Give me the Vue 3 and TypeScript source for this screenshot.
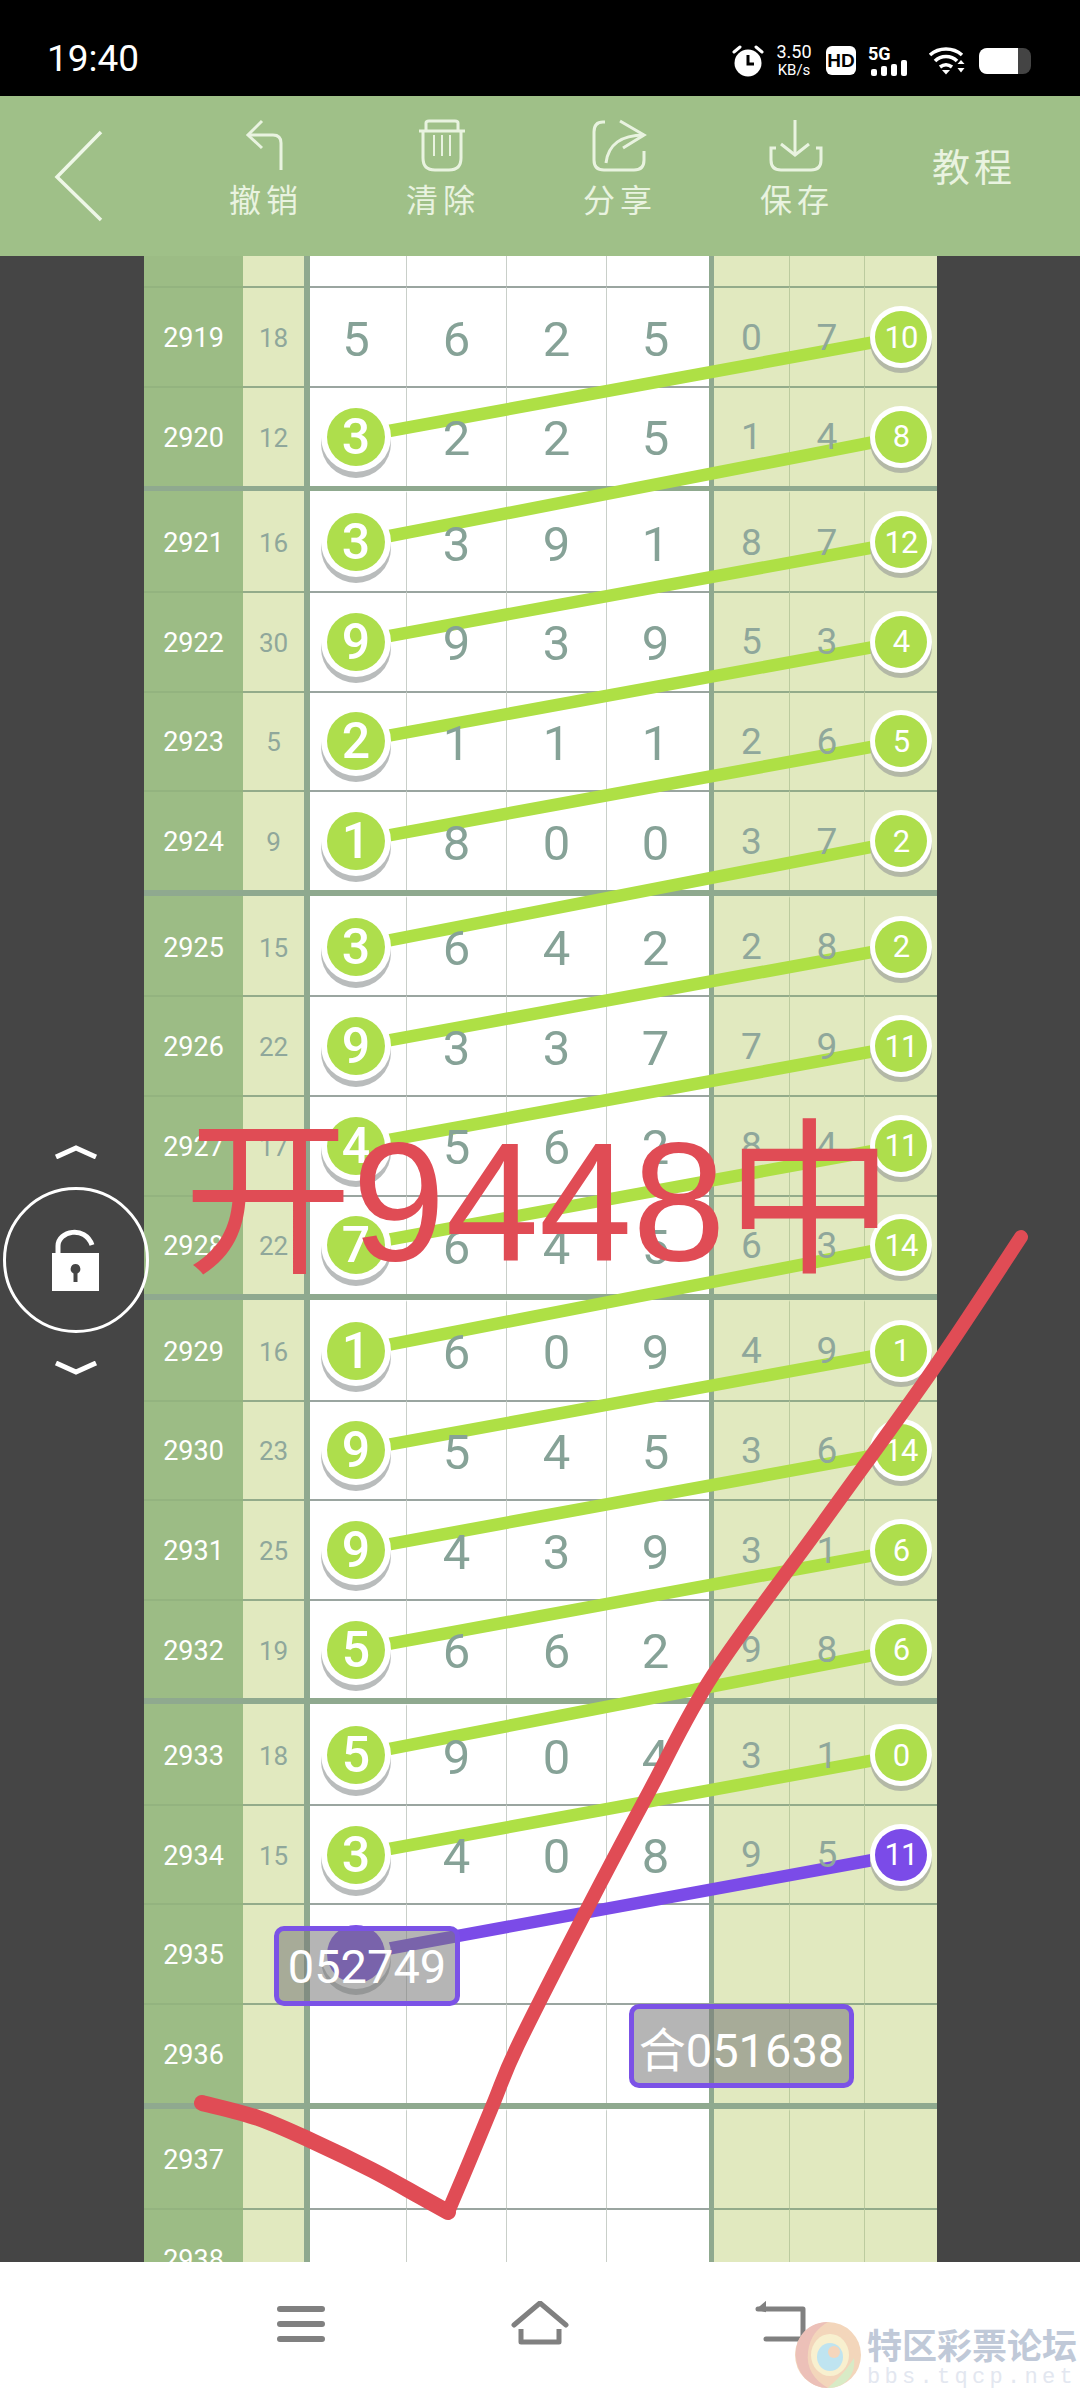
<script setup lang="ts">
interface Row {
  id: number
  sum: string
  main: string[]
  right: string[]
  leftBall?: boolean
  rightBall?: boolean
  leftPurple?: boolean
  rightPurple?: boolean
}

const ROW_H = 99.6
const SEP_H = 5.9
const TABLE_TOP = 186.8
const LEFT_X = 356
const RIGHT_X = 900

function mk(id: number, sum: string, m: string, r: string): Row {
  return {
    id,
    sum,
    main: m.split(''),
    right: r.split(' '),
    leftBall: id >= 2920 && id <= 2935,
    rightBall: id >= 2919 && id <= 2934,
  }
}

const groups: Row[][] = [
  [
    { id: 2918, sum: '14', main: ['7', '1', '7', '1'], right: ['', '', ''] },
    mk(2919, '18', '5625', '0 7 10'),
    mk(2920, '12', '3225', '1 4 8'),
  ],
  [mk(2921, '16', '3391', '8 7 12'), mk(2922, '30', '9939', '5 3 4'), mk(2923, '5', '2111', '2 6 5'), mk(2924, '9', '1800', '3 7 2')],
  [mk(2925, '15', '3642', '2 8 2'), mk(2926, '22', '9337', '7 9 11'), mk(2927, '17', '4562', '8 4 11'), mk(2928, '22', '7645', '6 3 14')],
  [mk(2929, '16', '1609', '4 9 1'), mk(2930, '23', '9545', '3 6 14'), mk(2931, '25', '9439', '3 1 6'), mk(2932, '19', '5662', '9 8 6')],
  [
    mk(2933, '18', '5904', '3 1 0'),
    { ...mk(2934, '15', '3408', '9 5 11'), rightPurple: true },
    { id: 2935, sum: '', main: ['', '', '', ''], right: ['', '', ''], leftBall: true, leftPurple: true },
    { id: 2936, sum: '', main: ['', '', '', ''], right: ['', '', ''] },
  ],
  [
    { id: 2937, sum: '', main: ['', '', '', ''], right: ['', '', ''] },
    { id: 2938, sum: '', main: ['', '', '', ''], right: ['', '', ''] },
  ],
]

interface Seg { x1: number; y1: number; x2: number; y2: number; purple: boolean }

function buildSegs(): Seg[] {
  const segs: Seg[] = []
  let y = TABLE_TOP
  let prev: { row: Row; cy: number } | null = null
  for (const g of groups) {
    for (const row of g) {
      const cy = y + 50.8
      if (row.leftBall && prev && prev.row.rightBall) {
        segs.push({ x1: LEFT_X, y1: cy, x2: RIGHT_X, y2: prev.cy, purple: !!row.leftPurple })
      }
      prev = { row, cy }
      y += ROW_H
    }
    y += SEP_H
  }
  return segs
}

function smooth(p: number[][]): string {
  let d = `M${p[0][0]} ${p[0][1]}`
  for (let i = 0; i < p.length - 1; i++) {
    const a = p[Math.max(0, i - 1)]
    const b = p[i]
    const c = p[i + 1]
    const e = p[Math.min(p.length - 1, i + 2)]
    const c1x = b[0] + (c[0] - a[0]) / 6
    const c1y = b[1] + (c[1] - a[1]) / 6
    const c2x = c[0] - (e[0] - b[0]) / 6
    const c2y = c[1] - (e[1] - b[1]) / 6
    d += `C${c1x} ${c1y} ${c2x} ${c2y} ${c[0]} ${c[1]}`
  }
  return d
}

const tickDown = smooth([[202, 2103], [258, 2118], [312, 2141], [372, 2170], [421, 2197], [448, 2212]])
const tickUp = smooth([[448, 2212], [470, 2160], [494, 2102], [518, 2045], [585, 1913], [650, 1790], [713, 1675], [822, 1524], [932, 1371], [1021, 1237]])

const segs = buildSegs()
const tableHeight = groups.reduce((a, g) => a + g.length * ROW_H + SEP_H, 0)
const tools = ['撤销', '清除', '分享', '保存']
</script>

<template>
  <div class="app">
    <header class="status">
      <span class="time">19:40</span>
      <div class="status-right">
        <svg class="alarm" width="34" height="34" viewBox="0 0 34 34">
          <circle cx="17" cy="19" r="13.500" fill="#fff" />
          <path d="M17 11v9h6" fill="none" stroke="#000" stroke-width="3" />
          <path d="M3 8l6-5M31 8l-6-5" stroke="#fff" stroke-width="3" stroke-linecap="round" />
        </svg>
        <div class="speed"><span class="sp1">3.50</span><span class="sp2">KB/s</span></div>
        <span class="hd">HD</span>
        <div class="signal">
          <span class="five">5G</span>
          <div class="bars"><i class="b1"></i><i class="b2"></i><i class="b3"></i><i class="b4"></i></div>
        </div>
        <svg class="wifi" width="38" height="28" viewBox="0 0 38 28">
          <path d="M2 8C11 0 25 0 34 8" fill="none" stroke="#fff" stroke-width="3.600" />
          <path d="M7 14C13 8 23 8 29 14" fill="none" stroke="#fff" stroke-width="3.600" />
          <path d="M12 20c4-3 8-3 12 0" fill="none" stroke="#fff" stroke-width="3.600" />
          <path d="M14 23h8l-4 4.500z" fill="#fff" />
          <path d="M33 13l3.500 4h-7zM29.500 21h7l-3.500 4.500z" fill="#fff" />
        </svg>
        <div class="battery"><div class="battery-fill"></div></div>
      </div>
    </header>

    <nav class="toolbar">
      <svg class="back" width="60" height="92" viewBox="0 0 60 92">
        <path d="M51 2L7 47L51 90" fill="none" stroke="#eef7e7" stroke-width="3.500" />
      </svg>
      <div v-for="(t, i) in tools" :key="t" class="tool">
        <svg width="60" height="56" viewBox="0 0 60 56" fill="none" stroke="#e9f3e0" stroke-width="3">
          <template v-if="i === 0">
            <path d="M27 3L13 17L27 30" />
            <path d="M13 17H38Q46 17 46 25V52" />
          </template>
          <template v-else-if="i === 1">
            <path d="M7 13H53" />
            <path d="M14 13V5Q14 3 17 3H43Q46 3 46 5V13" />
            <path d="M11 13V40Q11 52 23 52H37Q49 52 49 40V13" />
            <path d="M22 17V38M30 17V38M38 17V38" stroke-width="2" />
          </template>
          <template v-else-if="i === 2">
            <path d="M16 4H14Q5 4 5 14V42Q5 52 15 52H45Q55 52 55 42V33" />
            <path d="M31 3L55 17L34 30" />
            <path d="M17 45C19 27 32 17 55 17" />
          </template>
          <template v-else>
            <path d="M29 2V37" />
            <path d="M15 26L29 37L43 26" />
            <path d="M10 30H5V42Q5 52 15 52H45Q55 52 55 42V30H50" />
          </template>
        </svg>
        <span class="tool-label">{{ t }}</span>
      </div>
      <span class="course">教程</span>
    </nav>

    <main class="board">
      <div class="table">
        <svg
          class="links"
          width="793"
          :height="tableHeight"
          :viewBox="`144 ${TABLE_TOP} 793 ${tableHeight}`"
        >
          <line
            v-for="(s, i) in segs"
            :key="i"
            :x1="s.x1"
            :y1="s.y1"
            :x2="s.x2"
            :y2="s.y2"
            :stroke="s.purple ? '#7b4be8' : '#aee045'"
            stroke-width="12.500"
          />
        </svg>
        <div v-for="(g, gi) in groups" :key="gi" class="group">
          <div v-for="(r, ri) in g" :key="r.id" class="row" :class="{ first: ri === 0 }">
            <div class="cell id-cell"><span class="num">{{ r.id }}</span></div>
            <div class="cell sum-cell"><span class="num">{{ r.sum }}</span></div>
            <div class="bar"></div>
            <div v-for="(m, mi) in r.main" :key="mi" class="cell main-cell">
              <span v-if="mi === 0 && r.leftBall" class="ball big" :class="{ purple: r.leftPurple }">{{ m }}</span>
              <span v-else class="num">{{ m }}</span>
            </div>
            <div class="bar"></div>
            <div v-for="(m, mi) in r.right" :key="mi" class="cell right-cell">
              <span v-if="mi === 2 && r.rightBall" class="ball small" :class="{ purple: r.rightPurple }">{{ m }}</span>
              <span v-else class="num">{{ m }}</span>
            </div>
          </div>
          <div class="sep"></div>
        </div>
      </div>

      <div class="tag tag-a">052749</div>
      <div class="tag tag-b">合051638</div>

      <div class="lockrail">
        <svg width="44" height="14" viewBox="0 0 44 14"><path d="M2 12L22 3L42 12" fill="none" stroke="#fff" stroke-width="5" /></svg>
        <div class="lockcircle">
          <svg width="50" height="64" viewBox="0 0 50 64">
            <path d="M7 27V18C7 3 34 -3 41 17" fill="none" stroke="#fff" stroke-width="5" />
            <path fill-rule="evenodd" fill="#fff" d="M1 25H48V63H1ZM24.500 36a5 5 0 0 0-2 9.500V54h4v-8.500a5 5 0 0 0-2-9.500Z" />
          </svg>
        </div>
        <svg width="44" height="14" viewBox="0 0 44 14"><path d="M2 2L22 11L42 2" fill="none" stroke="#fff" stroke-width="5" /></svg>
      </div>

      <div class="scrawl">开9448中</div>
      <svg class="tick" width="1080" height="2006" viewBox="0 256 1080 2006" fill="none" stroke="#e04c55" stroke-linecap="round" stroke-linejoin="round">
        <path :d="tickDown" stroke-width="16" />
        <path :d="tickUp" stroke-width="14" />
      </svg>
    </main>

    <footer class="nav">
      <svg width="60" height="44" viewBox="0 0 60 44"><path d="M10 8H52M10 23H52M10 38H52" stroke="#808080" stroke-width="6" stroke-linecap="round" /></svg>
      <svg width="60" height="44" viewBox="0 0 60 44" fill="none" stroke="#808080" stroke-width="5">
        <path d="M4 24L30 2L56 24" stroke-linecap="round" stroke-linejoin="round" />
        <path d="M11 28V41H49V28" stroke-linejoin="round" />
      </svg>
      <svg width="60" height="44" viewBox="0 0 60 44" fill="none" stroke="#808080" stroke-width="5">
        <path d="M8 8H53V38H16" stroke-linejoin="round" stroke-linecap="round" />
        <path d="M15 2L8 8L15 10Z" fill="#808080" stroke-width="2" />
      </svg>
      <div class="watermark">
        <svg class="wm-logo" width="68" height="66" viewBox="0 0 68 66">
          <ellipse cx="34" cy="33" rx="33" ry="33" fill="#f3d6bb" />
          <path d="M34 0C10 0 0 20 2 36C4 54 18 66 34 66C20 58 12 46 14 30C16 14 24 6 34 0Z" fill="#ecc0b8" />
          <path d="M34 66C52 66 62 52 60 36C50 52 42 58 34 66Z" fill="#d8ebc6" />
          <ellipse cx="36" cy="33" rx="19" ry="21" fill="#f8f0cf" />
          <ellipse cx="36" cy="35" rx="13" ry="14" fill="#bfe4f0" />
          <ellipse cx="40" cy="30" rx="6" ry="6" fill="#f5d6bc" />
        </svg>
        <div class="wm-text">
          <span class="wm-main">特区彩票论坛</span>
          <span class="wm-sub">bbs.tqcp.net</span>
        </div>
      </div>
    </footer>
  </div>
</template>

<style>
html, body { margin: 0; padding: 0; }
</style>

<style scoped>
.app {
  position: relative;
  width: 1080px;
  height: 2388px;
  display: flex;
  flex-direction: column;
  overflow: hidden;
  font-family: Roboto, "Noto Sans CJK SC", sans-serif;
  background: #454545;
}
.status {
  height: 96px;
  flex: none;
  background: #000;
  color: #fff;
  display: flex;
  align-items: flex-start;
  justify-content: space-between;
  padding: 37px 49px 0 47px;
  box-sizing: border-box;
}
.time { font-size: 37px; line-height: 44px; }
.status-right { display: flex; align-items: center; gap: 0; margin-top: 6px; }
.alarm { margin-right: 10px; }
.speed { display: flex; flex-direction: column; align-items: center; width: 38px; line-height: 1; margin-right: 13px; }
.sp1 { font-size: 18px; }
.sp2 { font-size: 15px; margin-top: 2px; }
.hd {
  width: 30px; height: 29px; background: #fff; color: #000; border-radius: 6px;
  font: 700 19px/29px "Liberation Sans", sans-serif; text-align: center; margin-right: 12px;
}
.signal { position: relative; width: 46px; height: 30px; margin-right: 14px; }
.five { position: absolute; left: 0; top: 0; font-size: 18px; font-weight: 700; line-height: 16px; }
.bars { position: absolute; right: 7px; bottom: 0; display: flex; align-items: flex-end; gap: 4px; }
.bars i { display: block; width: 6px; background: #fff; border-radius: 2px; }
.b1 { height: 7px; } .b2 { height: 10px; } .b3 { height: 12px; } .b4 { height: 16px; }
.wifi { margin-right: 13px; }
.battery {
  width: 52px; height: 26px; border-radius: 8px; background: #444; overflow: hidden;
}
.battery-fill { width: 39px; height: 100%; background: #fff; border-radius: 6px 0 0 6px; }

.toolbar {
  height: 160px;
  flex: none;
  background: #9fc088;
  display: flex;
  align-items: flex-start;
  padding-left: 50px;
  color: #e9f3e0;
}
.back { margin-top: 34px; margin-right: 66px; }
.tool {
  width: 177px;
  display: flex;
  flex-direction: column;
  align-items: center;
  padding-top: 22px;
}
.tool-label { font-size: 32px; letter-spacing: 5px; line-height: 36px; margin-top: 9px; padding-left: 3px; }
.course { font-size: 38px; letter-spacing: 4px; margin-left: 48px; margin-top: 50px; line-height: 44px; }

.board { flex: 1; position: relative; overflow: hidden; background: #454545; }
.table { position: relative; width: 793px; margin: -69.2px 0 0 144px; }
.links { position: absolute; left: 0; top: 0; z-index: 1; }
.row {
  height: 99.6px;
  display: grid;
  grid-template-columns: 99px 61px 6px 96px 100px 100px 103px 5px 75px 75px 73px;
}
.cell {
  box-sizing: border-box;
  display: flex;
  align-items: center;
  justify-content: center;
  border-top: 2px solid #9aa5a0;
}
.row.first .cell { border-top-color: transparent; }
.num { position: relative; z-index: 2; }
.id-cell { background: #9cbc85; border-top-color: #93b37f; color: #fff; font-size: 27px; }
.sum-cell { background: #e1e9bf; border-top-color: #93ab8a; color: #8fa79b; font-size: 26px; }
.id-cell .num, .sum-cell .num { padding-top: 2px; }
.bar { background: #8fa98f; }
.main-cell { background: #fff; color: #86a297; font-size: 49px; border-left: 1px solid #c9cfc9; }
.main-cell .num { padding-top: 4px; }
.main-cell:nth-child(4) { padding-right: 4px; border-left: none; }
.main-cell:nth-child(7) { padding-right: 5px; }
.right-cell { background: #e1e9bf; border-top-color: #93ab8a; color: #8fa79b; font-size: 37px; border-left: 1px solid #bccb9f; }
.right-cell:nth-child(9) { border-left: none; }
.sep { height: 5.9px; background: #8fa98f; }

.ball {
  position: relative;
  z-index: 3;
  display: flex;
  align-items: center;
  justify-content: center;
  border-radius: 50%;
  background: #aede4c;
  color: #fff;
}
.ball.big {
  width: 58px; height: 58px; font-size: 50px; font-weight: 500;
  box-shadow: 0 0 0 6px #fff, 0 6px 0 6px #b9bcbc;
}
.ball.small {
  width: 52px; height: 52px; font-size: 31px; letter-spacing: -1px;
  box-shadow: 0 0 0 5px #fff, 0 5px 0 5px #b3b8a6;
}
.ball.purple { background: #7b4be8; }

.tag {
  position: absolute;
  z-index: 5;
  box-sizing: border-box;
  display: flex;
  align-items: center;
  justify-content: center;
  border: 5px solid #7b52e6;
  border-radius: 10px;
  background: rgba(120, 120, 120, 0.55);
  color: #fff;
  font-size: 47px;
}
.tag-a { left: 274px; top: 1670px; width: 186px; height: 80px; }
.tag-b { left: 629px; top: 1748px; width: 225px; height: 84px; }

.lockrail {
  position: absolute;
  z-index: 6;
  left: 3px;
  top: 889px;
  width: 146px;
  display: flex;
  flex-direction: column;
  align-items: center;
  gap: 28px;
}
.lockcircle {
  box-sizing: border-box;
  width: 146px;
  height: 146px;
  border: 3px solid #fff;
  border-radius: 50%;
  display: flex;
  align-items: center;
  justify-content: center;
}
.scrawl {
  position: absolute;
  z-index: 7;
  left: 184px;
  top: 862px;
  font-family: "Liberation Sans", "Noto Sans CJK SC", sans-serif;
  font-size: 168px;
  line-height: 168px;
  color: #e04c55;
  white-space: nowrap;
}
.tick { position: absolute; left: 0; top: 0; z-index: 8; }

.nav {
  position: relative;
  height: 126px;
  flex: none;
  background: #fff;
  display: flex;
  justify-content: center;
  gap: 180px;
  padding-top: 39px;
  box-sizing: border-box;
}
.watermark { position: absolute; left: 794px; top: 60px; width: 286px; height: 66px; display: flex; gap: 5px; }
.wm-text { display: flex; flex-direction: column; }
.wm-main { font-size: 35px; font-weight: 700; line-height: 36px; color: #c0c9d8; margin-top: 8px; white-space: nowrap; }
.wm-sub { font: 22px/20px "Liberation Mono", monospace; letter-spacing: 4.300px; color: #e3e7f0; margin-top: 2px; white-space: nowrap; }
</style>
